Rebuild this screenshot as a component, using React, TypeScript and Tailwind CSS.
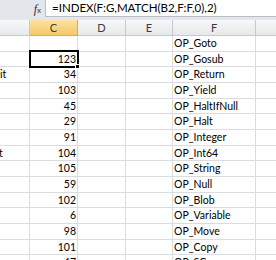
import React from "react";

const rows: { b?: string; c: string; f: string }[] = [
  { c: "", f: "OP_Goto" },
  { c: "123", f: "OP_Gosub" },
  { b: "it", c: "34", f: "OP_Return" },
  { c: "103", f: "OP_Yield" },
  { c: "45", f: "OP_HaltIfNull" },
  { c: "29", f: "OP_Halt" },
  { c: "91", f: "OP_Integer" },
  { b: "t", c: "104", f: "OP_Int64" },
  { c: "105", f: "OP_String" },
  { c: "59", f: "OP_Null" },
  { c: "102", f: "OP_Blob" },
  { c: "6", f: "OP_Variable" },
  { c: "98", f: "OP_Move" },
  { c: "101", f: "OP_Copy" },
  { c: "47", f: "OP_SCopy" },
];

export default function App() {
  return (
    <div className="relative w-[276px] h-[260px] overflow-hidden bg-white font-['Lato',sans-serif] text-[10.5px] text-black">
      {/* formula bar */}
      <div className="flex h-[17px] bg-[#e3e6ea]">
        <div className="w-[45px] flex items-center justify-end pr-[4px]">
          <span className="font-['Liberation_Serif',serif] italic text-[12px] leading-none text-[#333]">
            f<span className="text-[8px] not-italic font-['Liberation_Sans',sans-serif]">x</span>
          </span>
        </div>
        <div className="flex-1 bg-white border-l border-b border-[#b9bec6] flex items-center pl-[6px] text-[11.5px] leading-none">
          =INDEX(F:G,MATCH(B2,F:F,0),2)
        </div>
      </div>
      <div className="h-[3px] bg-[#e3e6ea]" />
      {/* header */}
      <div className="flex h-[16px] text-[11px] text-[#3b3b3b] leading-none">
        <div className="w-[30px] border-r border-b border-[#c6cad0] bg-gradient-to-b from-[#f7f8f9] to-[#e6e8eb]" />
        <div className="w-[48px] border-r border-b border-[#e2a84a] bg-gradient-to-b from-[#fbe2a0] to-[#f4c964] flex items-center justify-center">C</div>
        <div className="w-[48px] border-r border-b border-[#c6cad0] bg-gradient-to-b from-[#f7f8f9] to-[#e6e8eb] flex items-center justify-center">D</div>
        <div className="w-[47px] border-r border-b border-[#c6cad0] bg-gradient-to-b from-[#f7f8f9] to-[#e6e8eb] flex items-center justify-center">E</div>
        <div className="w-[83px] border-r border-b border-[#c6cad0] bg-gradient-to-b from-[#f7f8f9] to-[#e6e8eb] flex items-center justify-center">F</div>
        <div className="flex-1 border-b border-[#c6cad0] bg-gradient-to-b from-[#f7f8f9] to-[#e6e8eb]" />
      </div>
      {/* rows */}
      {rows.map((r, i) => (
        <div key={i} className="flex h-[15.67px] leading-none">
          <div className="w-[30px] border-r border-b border-[#dadcdd] flex items-center overflow-hidden">
            {r.b ? <span className={r.b === "t" ? "-ml-[1px]" : ""}>{r.b}</span> : null}
          </div>
          <div className="w-[48px] border-r border-b border-[#dadcdd] flex items-center justify-end pr-[1px]">{r.c}</div>
          <div className="w-[48px] border-r border-b border-[#dadcdd]" />
          <div className="w-[47px] border-r border-b border-[#dadcdd]" />
          <div className="w-[83px] border-r border-b border-[#dadcdd] flex items-center pl-[1px]">{r.f}</div>
          <div className="flex-1 border-b border-[#dadcdd]" />
        </div>
      ))}
      {/* selection */}
      <div className="absolute left-[29px] top-[50px] w-[50px] h-[18px] border-2 border-black" />
      <div className="absolute left-[75px] top-[64px] w-[5px] h-[5px] bg-black border border-white" />
    </div>
  );
}
